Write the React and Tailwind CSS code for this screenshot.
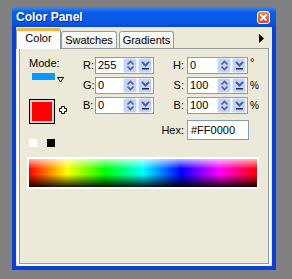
import React from 'react';

const rgb = [
  { label: 'R:', value: '255' },
  { label: 'G:', value: '0' },
  { label: 'B:', value: '0' },
];
const hsb = [
  { label: 'H:', value: '0', unit: '°' },
  { label: 'S:', value: '100', unit: '%' },
  { label: 'B:', value: '100', unit: '%' },
];

// XP-style spinner + dropdown pair inside a number box
const SpinButtons = () => (
  <>
    <div className="mr-[1px] flex h-full w-[14px] items-center justify-center rounded-[2px] border border-[#E3EBFE] bg-[#C3D3FB]">
      <svg width="9" height="11" viewBox="0 0 9 11">
        <path d="M1.5 4.5 L4.5 1.5 L7.5 4.5" fill="none" stroke="#4D6185" strokeWidth="1.6" />
        <path d="M1.5 6.5 L4.5 9.5 L7.5 6.5" fill="none" stroke="#4D6185" strokeWidth="1.6" />
      </svg>
    </div>
    <div className="mr-[1px] flex h-full w-[14px] items-center justify-center rounded-[2px] border border-[#E3EBFE] bg-[#C3D3FB]">
      <svg width="9" height="11" viewBox="0 0 9 11">
        <path d="M1 2 L4.5 5.5 L8 2" fill="none" stroke="#4D6185" strokeWidth="2" />
        <rect x="1" y="8" width="7" height="1.5" fill="#1F2D4F" />
      </svg>
    </div>
  </>
);

const NumField = ({ value, wide }) => (
  <div className={`flex h-[17px] items-stretch border border-[#7F9DB9] bg-white ${wide ? 'w-[61px]' : 'w-[59px]'}`}>
    <div className="flex-1 pl-[2px] leading-[15px]">{value}</div>
    <SpinButtons />
  </div>
);

const App = () => {
  return (
    <div className="h-[279px] w-[292px] bg-[#808080] pl-[12px] pt-[7px] font-['Liberation_Sans',Arial,sans-serif] text-[11px] text-black">
      <div className="flex h-[263px] w-[264px] flex-col">
        {/* Title bar */}
        <div className="flex h-[20px] items-center justify-between rounded-t-[3px] bg-[linear-gradient(to_bottom,#3D8BF7_0%,#0B5CE8_25%,#0857E5_80%,#0546D0_100%)] pl-[4px] pr-[6px]">
          <span className="text-[12px] font-bold leading-[20px] text-white [text-shadow:1px_1px_0_#0A2A8E]">Color Panel</span>
          <div className="mt-[1px] flex h-[13px] w-[13px] items-center justify-center rounded-[3px] border border-white bg-[linear-gradient(to_bottom,#EC8763,#D9492A)]">
            <svg width="9" height="9" viewBox="0 0 9 9">
              <path d="M1.5 1.5 L7.5 7.5 M7.5 1.5 L1.5 7.5" stroke="white" strokeWidth="1.8" />
            </svg>
          </div>
        </div>

        {/* Body */}
        <div className="flex flex-1 flex-col border-x-[4px] border-b-[4px] border-[#0B3FD9] bg-[#ECE9D8] pb-[2px]">
          {/* Tabs */}
          <div className="flex h-[21px] items-end">
            <div className="relative z-10 mb-[-1px] flex h-[21px] w-[45px] justify-center self-start mt-[1px] rounded-t-[3px] border-x border-t-[3px] border-x-[#919B9C] border-t-[#F7B53E] bg-[#FCFCFE]">
              <span className="mt-[1px] leading-[12px]">Color</span>
            </div>
            <div className="flex h-[17px] w-[56px] justify-center rounded-t-[3px] border border-b-0 border-[#919B9C] bg-[linear-gradient(to_bottom,#FFFFFF,#ECEBE6)]">
              <span className="mt-[1px] leading-[14px]">Swatches</span>
            </div>
            <div className="ml-[2px] flex h-[17px] w-[55px] justify-center rounded-t-[3px] border border-b-0 border-[#919B9C] bg-[linear-gradient(to_bottom,#FFFFFF,#ECEBE6)]">
              <span className="mt-[1px] leading-[14px]">Gradients</span>
            </div>
            <div className="ml-auto mr-[8px] mt-[7px] self-start">
              <svg width="5" height="9" viewBox="0 0 5 9">
                <polygon points="0,0 5,4.5 0,9" fill="black" />
              </svg>
            </div>
          </div>

          {/* Tab pane */}
          <div className="mx-[3px] flex flex-1 flex-col border border-[#919B9C] bg-[#ECE9D8] pl-[9px] pt-[8px] shadow-[-2px_0_0_#FBFAF5,2px_0_0_#FBFAF5,0_2px_0_#FBFAF5]">
            <div className="flex items-start">
              {/* Left column */}
              <div className="flex w-[52px] flex-col">
                <div className="-mt-[1px] h-[14px] leading-[14px]">Mode:</div>
                <div className="mt-[3px] flex items-start">
                  <div className="ml-[3px] h-[7px] w-[23px] bg-[#0A98FF]" />
                  <svg className="ml-[2px] mt-[4px]" width="7" height="6" viewBox="0 0 7 6">
                    <polygon points="0.5,0.5 6.5,0.5 3.5,5" fill="white" stroke="black" strokeWidth="1" />
                  </svg>
                </div>
                <div className="mt-[16px] flex items-start">
                  <div className="h-[25px] w-[26px] border border-black bg-[#D4D0C8] p-[2px]">
                    <div className="h-full w-full bg-[#FF0000]" />
                  </div>
                  <svg className="ml-[4px] mt-[7px]" width="8" height="8" viewBox="0 0 8 8">
                    <path d="M2.5 0.5 H5.5 V2.5 H7.5 V5.5 H5.5 V7.5 H2.5 V5.5 H0.5 V2.5 H2.5 Z" fill="white" stroke="black" strokeWidth="1" />
                  </svg>
                </div>
                <div className="mt-[15px] flex gap-[10px]">
                  <div className="h-[8px] w-[8px] bg-white" />
                  <div className="h-[8px] w-[8px] bg-black" />
                </div>
              </div>

              {/* Number fields */}
              <div className="flex flex-col">
                {rgb.map((c, i) => (
                  <div key={c.label + i} className={`flex h-[17px] items-center ${i > 0 ? 'mt-[3px]' : ''}`}>
                    <div className="w-[14px] pl-[2px]">{c.label}</div>
                    <NumField value={c.value} />
                    <div className="w-[33px] pr-[3px] text-right">{hsb[i].label}</div>
                    <NumField value={hsb[i].value} wide />
                    <div className={`pl-[2px] ${hsb[i].unit === '°' ? 'self-start leading-[10px]' : 'text-[10px]'}`}>{hsb[i].unit}</div>
                  </div>
                ))}
                <div className="mt-[6px] flex h-[20px] items-center">
                  <div className="w-[73px]" />
                  <div className="w-[33px] pr-[3px] text-right">Hex:</div>
                  <div className="h-[20px] w-[62px] border border-[#7F9DB9] bg-white pl-[3px] leading-[18px]">#FF0000</div>
                </div>
              </div>
            </div>

            {/* Spectrum */}
            <div className="-ml-[2px] mt-[10px] h-[32px] w-[232px] border-2 border-white bg-[linear-gradient(to_right,#FF0000,#FFFF00,#00FF00,#00FFFF,#0000FF,#FF00FF,#FF0000)]">
              <div className="h-full w-full bg-[linear-gradient(to_bottom,rgba(255,255,255,0.7)_0%,rgba(255,255,255,0)_35%,rgba(0,0,0,0)_55%,rgba(0,0,0,0.9)_100%)]" />
            </div>
          </div>
        </div>
      </div>
    </div>
  );
};

export default App;
